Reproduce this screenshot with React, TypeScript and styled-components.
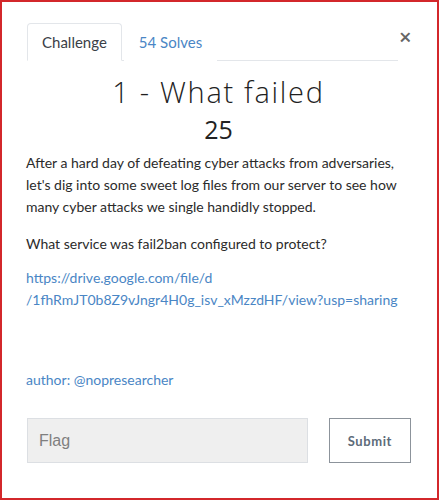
import React from "react";
import styled, { createGlobalStyle } from "styled-components";

const Global = createGlobalStyle`
  html, body { margin: 0; padding: 0; background: #fff; }
  * { box-sizing: border-box; }
`;

const Frame = styled.div`
  width: 439px;
  height: 500px;
  border: 2px solid #d3272b;
  background: #fff;
  padding: 21px 26px 0 24px;
  font-family: Lato, "Open Sans", sans-serif;
  color: #333;
`;

const Header = styled.div`
  display: flex;
  align-items: flex-start;
`;

const Tabs = styled.div`
  flex: 1;
  display: flex;
  border-bottom: 1px solid #e3e6ea;
  margin-left: 1px;
`;

const Tab = styled.div<{ $active?: boolean }>`
  height: 38px;
  padding: 0 14px;
  display: flex;
  align-items: center;
  font-size: 15px;
  margin-bottom: -1px;
  border: 1px solid ${(p) => (p.$active ? "#e3e6ea" : "transparent")};
  border-bottom-color: ${(p) => (p.$active ? "#fff" : "transparent")};
  border-radius: 4px 4px 0 0;
  background: #fff;
  color: ${(p) => (p.$active ? "#3a4047" : "#4a86c5")};
  margin-right: 2px;
`;

const Close = styled.div`
  width: 12px;
  margin-left: 1px;
  margin-top: 2px;
  font-family: "Open Sans", sans-serif;
  font-size: 22px;
  line-height: 22px;
  font-weight: 600;
  color: #666;
`;

const Title = styled.h1`
  margin: 14px 0 0;
  text-align: center;
  font-family: "Open Sans", sans-serif;
  font-weight: 300;
  font-size: 29px;
  line-height: 34px;
  letter-spacing: 1.7px;
  color: #1f1f1f;
`;

const Value = styled.div`
  text-align: center;
  font-family: "Open Sans", sans-serif;
  font-size: 25px;
  line-height: 30px;
  color: #222;
  margin-top: 5px;
`;

const Para = styled.p`
  margin: 8px 0 0;
  font-size: 14px;
  line-height: 22px;
  color: #2b2b2b;
`;

const Para2 = styled(Para)`
  margin-top: 15px;
`;

const LinkBlock = styled.a`
  display: block;
  margin-top: 12px;
  font-size: 14px;
  line-height: 22px;
  color: #4a86c5;
  text-decoration: none;
`;

const Author = styled.div`
  margin-top: 58px;
  font-size: 14px;
  line-height: 22px;
  color: #4a86c5;
`;

const FormRow = styled.div`
  display: flex;
  margin-top: 27px;
  gap: 21px;
  padding-left: 1px;
`;

const FlagInput = styled.input`
  width: 283px;
  height: 45px;
  border: 1px solid #dcdfe3;
  background: #efefef;
  padding: 0 11px;
  font-family: "Liberation Sans", Arial, sans-serif;
  font-size: 16px;
  color: #333;
  outline: none;
  &::placeholder { color: #7f7f7f; }
`;

const SubmitButton = styled.button`
  width: 83px;
  height: 45px;
  border: 1px solid #8c939b;
  background: #fff;
  font-family: Lato, sans-serif;
  font-weight: 700;
  font-size: 13px;
  letter-spacing: 0.6px;
  color: #5d6b79;
`;

export default function App() {
  return (
    <>
      <Global />
      <Frame>
        <Header>
          <Tabs>
            <Tab $active>Challenge</Tab>
            <Tab>54 Solves</Tab>
          </Tabs>
          <Close>×</Close>
        </Header>
        <Title>1 - What failed</Title>
        <Value>25</Value>
        <Para>
          After a hard day of defeating cyber attacks from adversaries, let's dig into some sweet log files from our
          server to see how many cyber attacks we single handidly stopped.
        </Para>
        <Para2>What service was fail2ban configured to protect?</Para2>
        <LinkBlock href="#">
          https://drive.google.com/file/d
          <br />
          /1fhRmJT0b8Z9vJngr4H0g_isv_xMzzdHF/view?usp=sharing
        </LinkBlock>
        <Author>author: @nopresearcher</Author>
        <FormRow>
          <FlagInput placeholder="Flag" />
          <SubmitButton>Submit</SubmitButton>
        </FormRow>
      </Frame>
    </>
  );
}
